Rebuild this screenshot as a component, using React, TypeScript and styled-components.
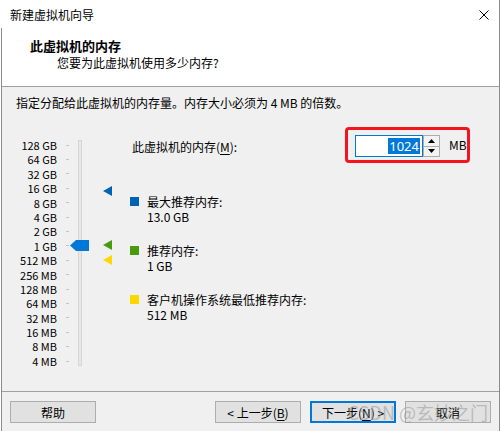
import React from 'react';
import styled, { createGlobalStyle } from 'styled-components';

const Global = createGlobalStyle`
  *, *::before, *::after { box-sizing: border-box; }
  html, body { margin: 0; padding: 0; background: #ffffff; }
  body {
    font-family: "Noto Sans CJK SC", "Noto Sans", sans-serif;
    font-size: 12px;
    line-height: 15px;
    color: #000;
  }
  #root { width: 500px; height: 431px; }
`;

const Window = styled.div`
  position: relative;
  width: 500px;
  height: 431px;
  border-right: 1px solid #8c8c8c;
  display: flex;
  flex-direction: column;
  overflow: hidden;
  background: #fff;
`;

const TitleBar = styled.div`
  height: 28px;
  flex: none;
  display: flex;
  align-items: center;
  justify-content: space-between;
  padding: 1px 10px 0 10px;
`;

const Frame = styled.div`
  flex: 1;
  margin-left: 1px;
  border-left: 1px solid #8c8c8c;
  display: flex;
  flex-direction: column;
  background: #f0f0f0;
  min-height: 0;
`;

const Header = styled.div`
  height: 59px;
  flex: none;
  background: #fff;
  border-bottom: 1px solid #a0a0a0;
  padding: 10px 0 0 28px;
  display: flex;
  flex-direction: column;
`;

const HeaderTitle = styled.div`
  font-size: 13px;
  font-weight: 700;
  line-height: 16px;
`;

const HeaderSub = styled.div`
  margin-left: 27px;
  line-height: 17px;
`;

const Body = styled.div`
  flex: 1;
  padding: 8px 0 0 14px;
  display: flex;
  flex-direction: column;
  min-height: 0;
`;

const Instruction = styled.div`
  line-height: 16px;
`;

const Main = styled.div`
  display: flex;
  align-items: flex-start;
  margin: 16px 0 0 -14px;
`;

const SliderArea = styled.div`
  position: relative;
  width: 128px;
  margin-top: 11px;
  display: flex;
  flex: none;
`;

const Labels = styled.div`
  width: 55px;
  display: flex;
  flex-direction: column;
`;

const LabelRow = styled.div`
  height: 14.4px;
  line-height: 14.4px;
  font-size: 11px;
  text-align: right;
  white-space: nowrap;
`;

const Ticks = styled.div`
  margin-left: 9px;
  width: 3px;
  display: flex;
  flex-direction: column;
`;

const TickRow = styled.div`
  height: 14.4px;
  display: flex;
  align-items: center;
  &::after {
    content: '';
    display: block;
    width: 3px;
    height: 1px;
    background: #c4c4c4;
  }
`;

const Track = styled.div`
  margin: 2px 0 0 9px;
  width: 4px;
  height: 226px;
  border: 1px solid #d6d6d6;
  background: #e7e7e7;
`;

const Overlay = styled.svg<{ $left: number; $top: number }>`
  position: absolute;
  left: ${(p) => p.$left}px;
  top: ${(p) => p.$top}px;
  display: block;
`;

const RightCol = styled.div`
  display: flex;
  flex-direction: column;
  width: 345px;
`;

const MemoryRow = styled.div`
  display: flex;
  align-items: center;
  height: 36px;
`;

const MemoryLabel = styled.div`
  width: 215px;
  padding: 2px 0 0 2px;
  white-space: nowrap;
`;

const U = styled.span`
  text-decoration: underline;
  text-underline-offset: 2px;
`;

const Highlight = styled.div`
  display: flex;
  align-items: flex-start;
  width: 125px;
  height: 36px;
  border: 3px solid #f5141e;
  border-radius: 4px;
  padding: 5px 0 0 7px;
`;

const SpinInput = styled.div`
  width: 68px;
  height: 22px;
  border: 1px solid #0078d7;
  background: #fff;
  display: flex;
  align-items: center;
  justify-content: flex-end;
  padding-right: 2px;
`;

const Selected = styled.span`
  font-family: "Noto Sans", sans-serif;
  font-size: 13px;
  line-height: 16px;
  background: #0078d7;
  color: #fff;
  padding: 0 1px;
`;

const SpinButtons = styled.div`
  width: 17px;
  height: 22px;
  display: flex;
  flex-direction: column;
`;

const SpinBtn = styled.div`
  flex: 1;
  border: 1px solid #adadad;
  background: #f3f3f3;
  display: flex;
  align-items: center;
  justify-content: center;
  & + & { border-top: none; }
`;

const Unit = styled.div`
  margin: 2px 0 0 9px;
  line-height: 16px;
`;

const Legend = styled.div`
  display: flex;
  flex-direction: column;
  margin-top: 31px;
`;

const LegendItem = styled.div`
  display: flex;
  align-items: flex-start;
  & + & { margin-top: 19px; }
`;

const Swatch = styled.div<{ $color: string }>`
  width: 9px;
  height: 9px;
  margin-top: 3px;
  background: ${(p) => p.$color};
  flex: none;
`;

const LegendText = styled.div`
  margin-left: 8px;
  display: flex;
  flex-direction: column;
  line-height: 15px;
`;

const Footer = styled.div`
  flex: none;
  height: 40px;
  border-top: 1px solid #a0a0a0;
  padding: 9px 8px 0 8px;
  display: flex;
  align-items: flex-start;
  gap: 9px;
  position: relative;
`;

const Spacer = styled.div`
  flex: 1;
`;

const Button = styled.div<{ $primary?: boolean }>`
  width: 86px;
  height: 22px;
  border: ${(p) => (p.$primary ? '2px solid #0078d7' : '1px solid #adadad')};
  background: #e1e1e1;
  display: flex;
  align-items: center;
  justify-content: center;
  line-height: 15px;
  white-space: nowrap;
`;

const Watermark = styled.div`
  position: absolute;
  right: 11px;
  top: 9px;
  font-size: 18px;
  line-height: 22px;
  color: rgba(150, 150, 150, 0.55);
  white-space: nowrap;
  pointer-events: none;
`;

const labels = [
  '128 GB', '64 GB', '32 GB', '16 GB', '8 GB', '4 GB', '2 GB', '1 GB',
  '512 MB', '256 MB', '128 MB', '64 MB', '32 MB', '16 MB', '8 MB', '4 MB',
];

const Marker = ({ color, left, top }: { color: string; left: number; top: number }) => (
  <Overlay $left={left} $top={top} width="9" height="10" viewBox="0 0 9 10">
    <polygon points="0,5 9,0 9,10" fill={color} />
  </Overlay>
);

export default function App() {
  return (
    <>
      <Global />
      <Window>
        <TitleBar>
          <span>新建虚拟机向导</span>
          <svg width="10" height="10" viewBox="0 0 10 10">
            <path d="M0.5 0.5 L9.5 9.5 M9.5 0.5 L0.5 9.5" stroke="#000" strokeWidth="1" />
          </svg>
        </TitleBar>
        <Frame>
          <Header>
            <HeaderTitle>此虚拟机的内存</HeaderTitle>
            <HeaderSub>您要为此虚拟机使用多少内存?</HeaderSub>
          </Header>
          <Body>
            <Instruction>指定分配给此虚拟机的内存量。内存大小必须为 4 MB 的倍数。</Instruction>
            <Main>
              <SliderArea>
                <Labels>
                  {labels.map((l) => (
                    <LabelRow key={l}>{l}</LabelRow>
                  ))}
                </Labels>
                <Ticks>
                  {labels.map((l) => (
                    <TickRow key={l} />
                  ))}
                </Ticks>
                <Track />
                <Overlay $left={68} $top={102} width="19" height="11" viewBox="0 0 19 11">
                  <polygon points="0,5.5 6,0 19,0 19,11 6,11" fill="#0078d7" />
                </Overlay>
                <Marker color="#0063b1" left={101} top={48} />
                <Marker color="#4a9a10" left={101} top={102} />
                <Marker color="#fcd800" left={101} top={117} />
              </SliderArea>
              <RightCol>
                <MemoryRow>
                  <MemoryLabel>
                    此虚拟机的内存(<U>M</U>):
                  </MemoryLabel>
                  <Highlight>
                    <SpinInput>
                      <Selected>1024</Selected>
                    </SpinInput>
                    <SpinButtons>
                      <SpinBtn>
                        <svg width="7" height="4" viewBox="0 0 7 4">
                          <polygon points="3.5,0 7,4 0,4" fill="#000" />
                        </svg>
                      </SpinBtn>
                      <SpinBtn>
                        <svg width="7" height="4" viewBox="0 0 7 4">
                          <polygon points="0,0 7,0 3.5,4" fill="#000" />
                        </svg>
                      </SpinBtn>
                    </SpinButtons>
                    <Unit>MB</Unit>
                  </Highlight>
                </MemoryRow>
                <Legend>
                  <LegendItem>
                    <Swatch $color="#0063b1" />
                    <LegendText>
                      <span>最大推荐内存:</span>
                      <span>13.0 GB</span>
                    </LegendText>
                  </LegendItem>
                  <LegendItem>
                    <Swatch $color="#4a9a10" />
                    <LegendText>
                      <span>推荐内存:</span>
                      <span>1 GB</span>
                    </LegendText>
                  </LegendItem>
                  <LegendItem>
                    <Swatch $color="#fcd800" />
                    <LegendText>
                      <span>客户机操作系统最低推荐内存:</span>
                      <span>512 MB</span>
                    </LegendText>
                  </LegendItem>
                </Legend>
              </RightCol>
            </Main>
          </Body>
          <Footer>
            <Button>帮助</Button>
            <Spacer />
            <Button>
              &lt; 上一步(<U>B</U>)
            </Button>
            <Button $primary>
              下一步(<U>N</U>) &gt;
            </Button>
            <Button>取消</Button>
            <Watermark>CSDN @玄妙之门</Watermark>
          </Footer>
        </Frame>
      </Window>
    </>
  );
}
